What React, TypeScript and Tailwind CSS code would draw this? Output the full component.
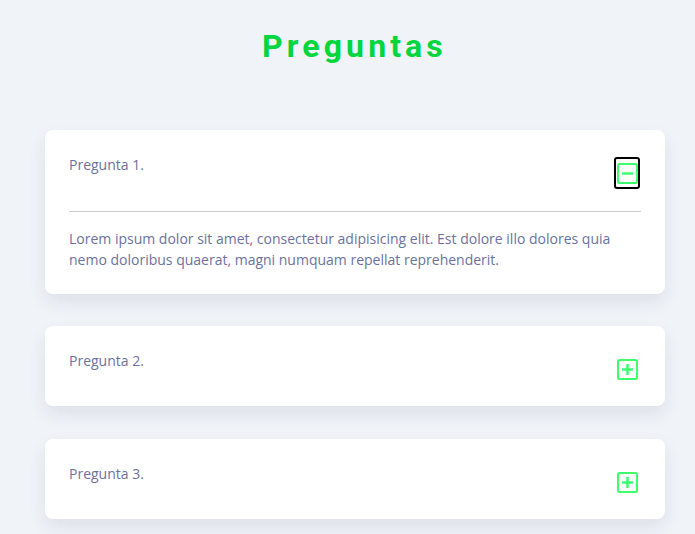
import React from "react";

const ACCENT = "#3dff6a";

function SquareIcon({ open }: { open: boolean }) {
  return (
    <svg width="21" height="21" viewBox="0 0 21 21" fill="none">
      <rect x="1" y="1" width="19" height="19" rx="1.5" stroke={ACCENT} strokeWidth="2" />
      <line x1="5" y1="10.5" x2="16" y2="10.5" stroke={ACCENT} strokeWidth="2.5" />
      {!open && <line x1="10.5" y1="5" x2="10.5" y2="16" stroke={ACCENT} strokeWidth="2.5" />}
    </svg>
  );
}

const items = [
  {
    q: "Pregunta 1.",
    a: "Lorem ipsum dolor sit amet, consectetur adipisicing elit. Est dolore illo dolores quia nemo doloribus quaerat, magni numquam repellat reprehenderit.",
    open: true,
  },
  { q: "Pregunta 2.", a: "", open: false },
  { q: "Pregunta 3.", a: "", open: false },
];

export default function App() {
  return (
    <div className="min-h-screen bg-[#f0f3f8] pt-[26px] pb-10" style={{ fontFamily: "'Open Sans', sans-serif" }}>
      <h1
        className="text-center text-[32px] leading-10 font-bold tracking-[4.1px] pl-[14px] text-[#01d63e]"
        style={{ fontFamily: "Roboto, sans-serif" }}
      >
        Preguntas
      </h1>
      <div className="mt-16 mx-[45px] w-[620px] flex flex-col gap-8">
        {items.map((it, i) => (
          <div
            key={i}
            className={`bg-white rounded-lg shadow-[0_8px_18px_rgba(30,40,70,0.09)] px-6 ${i === 2 ? "mt-px" : ""}`}
          >
            <div className="flex justify-between items-start h-20">
              <p className="pt-[25px] text-sm leading-5 text-[#6b72a0]">{it.q}</p>
              <button
                className={`mt-[27px] mr-px h-8 w-[26px] flex items-center justify-center rounded-[3px] border-2 ${
                  it.open ? "border-black" : "border-transparent"
                }`}
              >
                <SquareIcon open={it.open} />
              </button>
            </div>
            {it.open && (
              <div className="pb-6">
                <div className="mt-px border-t border-[#cccccc]" />
                <p className="mt-4 text-sm leading-[21px] text-[#6b72a0]">{it.a}</p>
              </div>
            )}
          </div>
        ))}
      </div>
    </div>
  );
}
